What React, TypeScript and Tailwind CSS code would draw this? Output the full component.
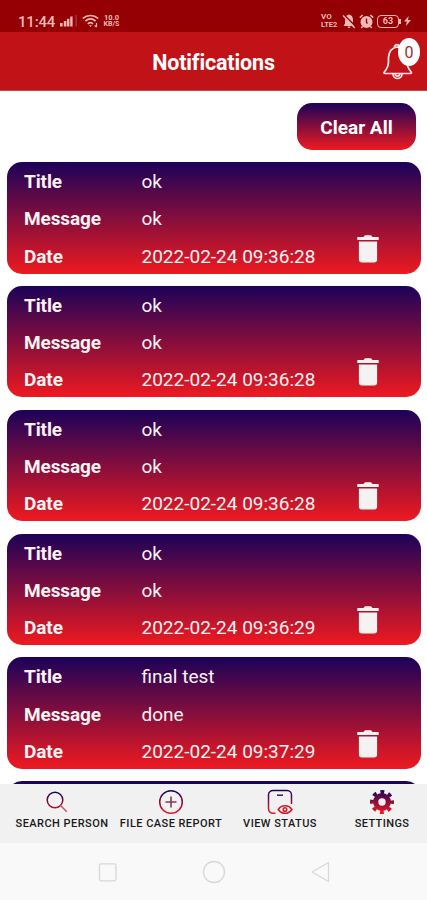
import React from 'react';

interface Notification {
  id: number;
  title: string;
  message: string;
  date: string;
}

const notifications: Notification[] = [
  { id: 1, title: 'ok', message: 'ok', date: '2022-02-24 09:36:28' },
  { id: 2, title: 'ok', message: 'ok', date: '2022-02-24 09:36:28' },
  { id: 3, title: 'ok', message: 'ok', date: '2022-02-24 09:36:28' },
  { id: 4, title: 'ok', message: 'ok', date: '2022-02-24 09:36:29' },
  { id: 5, title: 'final test', message: 'done', date: '2022-02-24 09:37:29' },
];

const StatusBar: React.FC = () => (
  <div className="flex h-8 shrink-0 items-end justify-between bg-[#940003] pr-[16px] pb-[2px] pl-[18px] text-[#f0b9b4]">
    <div className="flex h-[18px] items-center">
      <span className="w-[37px] pt-[2px] text-[15px] leading-[17px] font-medium tracking-[-0.2px] whitespace-nowrap">11:44</span>
      <svg className="ml-[5px]" width="18" height="14" viewBox="0 0 18 14" fill="currentColor">
        <rect x="0" y="9" width="2.6" height="3.5" />
        <rect x="3.8" y="7" width="2.6" height="5.5" />
        <rect x="7" y="4.8" width="2.4" height="7.7" />
        <rect x="10.2" y="2.5" width="2.4" height="10" />
        <rect x="15.4" y="1" width="1.6" height="11.5" opacity="0.25" />
      </svg>
      <svg className="ml-[4px]" width="18" height="14" viewBox="0 0 18 14" fill="none" stroke="currentColor" strokeWidth="1.7">
        <path d="M.8 4.4C5.400 .5 11.600 .5 16.200 4.400" />
        <path d="M3.400 7.200C6.500 4.500 10.500 4.500 13.600 7.200" />
        <path d="M5.800 9.800C7.500 8.300 9.500 8.300 11 9.800" />
        <path d="M7 11.300h3L8.500 13z" fill="currentColor" stroke="none" />
        <path d="M14.500 9v4M12.700 11.500l1.800 1.500" strokeWidth="1.200" />
      </svg>
      <div className="ml-[3px] flex w-[17px] flex-col items-center text-[7.5px] leading-[7.5px] font-bold">
        <span>10.0</span>
        <span className="text-[7px] leading-[7px]">KB/S</span>
      </div>
    </div>
    <div className="flex h-[18px] items-center">
      <div className="flex w-[18px] flex-col text-[8px] leading-[8px] font-bold">
        <span>VO</span>
        <span className="text-[7.5px]">LTE2</span>
      </div>
      <svg className="ml-[3px]" width="14" height="15" viewBox="0 0 14 15">
        <path d="M7 .5C4 1 3 3.500 3 6v3.500L1.500 12h11L11 9.500V6C11 3.500 10 1 7 .5zM5.500 12.600a1.500 1.500 0 0 0 3 0z" fill="currentColor" />
        <path d="M2.200 1 13.700 12.500" stroke="#940003" strokeWidth="1.400" />
        <path d="M1 1.500 12.800 14" stroke="currentColor" strokeWidth="1.300" />
      </svg>
      <svg className="ml-[3px]" width="15" height="15" viewBox="0 0 15 15">
        <circle cx="7.500" cy="8" r="6" fill="currentColor" />
        <path d="M.8 3.700 3.700 1M14.200 3.700 11.300 1M3.500 12.500 2.200 14M11.500 12.500l1.300 1.500" stroke="currentColor" strokeWidth="1.600" />
        <path d="M7.500 4.500V8.500L8.500 9.500" fill="none" stroke="#940003" strokeWidth="1.300" />
      </svg>
      <div className="ml-[3px] flex h-[13px] w-[22px] items-center justify-center rounded-[4px] border border-current pt-px text-[9px] leading-none font-bold">
        63
      </div>
      <div className="h-[5px] w-[2px] bg-current" />
      <svg className="ml-[3px]" width="7" height="10" viewBox="0 0 7 10" fill="currentColor">
        <path d="M4.700 0 0 5.600h2.800L2 10l5-6H4z" />
      </svg>
    </div>
  </div>
);

const Header: React.FC = () => (
  <header className="relative flex h-[59px] shrink-0 items-center justify-center border-b border-[#d5413f] bg-[#c11218]">
    <h1 className="pt-[3px] text-[21.5px] leading-[28px] font-bold tracking-[-0.15px] text-white">Notifications</h1>
    <svg className="absolute top-[10px] left-[382px]" width="32" height="40" viewBox="0 0 32 40" fill="none" stroke="#ffe9e6" strokeWidth="1.700">
      <path d="M12.500 5a2.400 2.400 0 0 1 4.800 0M14.800 5C9 6 7 10.500 6.500 15v5c0 4.500-1.600 7-4.300 10.200q-.8 1.300.8 1.300h25.500q1.600 0 .8-1.300c-2.700-3.200-4.300-5.700-4.300-10.200v-5C24.500 10 21 5 14.800 5z" strokeLinejoin="round" />
      <path d="M11 32a4.500 4.500 0 0 0 9 0M13.300 32a2.200 2.200 0 0 0 4.400 0" />
    </svg>
    <div className="absolute top-[6px] left-[398px] flex h-[28px] w-[22px] items-center justify-center rounded-[50%] bg-white pt-[2px] text-[16px] text-[#9c2c35]">
      0
    </div>
  </header>
);

const TrashIcon: React.FC = () => (
  <svg width="22" height="28" viewBox="0 0 22 28" fill="#f5f3f2">
    <path d="M.3 1.900h6.200L8 .3h6l1.500 1.600h6.200V5H.3zM1.900 6.400h18.200v18.200a3 3 0 0 1-3 3H4.900a3 3 0 0 1-3-3z" />
  </svg>
);

interface FieldProps {
  label: string;
  value: string;
}

const Field: React.FC<FieldProps> = ({ label, value }) => (
  <div className="flex h-[37.2px] items-center pt-[3px] text-[19px] leading-[22px] text-[#fdf3f3]">
    <span className="w-[117.5px] font-bold tracking-[-0.1px]">{label}</span>
    <span>{value}</span>
  </div>
);

interface NotificationCardProps {
  item: Notification;
}

const NotificationCard: React.FC<NotificationCardProps> = ({ item }) => (
  <div className="flex h-[111.300px] w-[414px] shrink-0 items-end justify-between rounded-[15px] bg-linear-to-b/srgb from-[#1b0259] to-[#ee1a20] pr-[42px] pl-[17px]">
    <div>
      <Field label="Title" value={item.title} />
      <Field label="Message" value={item.message} />
      <Field label="Date" value={item.date} />
    </div>
    <button className="mb-[11px]" aria-label="Delete">
      <TrashIcon />
    </button>
  </div>
);

const SearchIcon = () => (
  <svg width="22" height="22" viewBox="0 0 22 22" fill="none" stroke="url(#brand)" strokeWidth="1.500">
    <circle cx="9" cy="9" r="7.800" />
    <path d="m14.300 14.300 6.500 6.500" stroke="#d9505c" />
  </svg>
);

const AddIcon = () => (
  <svg width="26" height="26" viewBox="0 0 26 26" fill="none" stroke="url(#brand)">
    <circle cx="13" cy="13" r="11.300" strokeWidth="1.500" />
    <path d="M13 7.500v11" stroke="#713052" strokeWidth="1.500" />
    <path d="M7.500 13h11" stroke="#8c3452" strokeWidth="1.500" />
  </svg>
);

const StatusIcon = () => (
  <svg width="26" height="26" viewBox="0 0 26 26" fill="none" stroke="url(#brand)" strokeWidth="1.500">
    <path d="M8.500 24.300H6a4.500 4.500 0 0 1-4.500-4.500v-14A4.500 4.500 0 0 1 6 1.500h14a4.500 4.500 0 0 1 4.500 4.500v9" />
    <path d="M10 6.200h6" stroke="#2b1d62" strokeWidth="1.500" />
    <path d="M11.300 20.500c3-5 10.500-5 13.500 0-3 5-10.500 5-13.500 0z" stroke="#cf1e30" strokeWidth="1.700" />
    <circle cx="18" cy="20.500" r="1.800" stroke="#cf1e30" />
  </svg>
);

const GearIcon = () => (
  <svg width="26" height="26" viewBox="0 0 26 26" fill="none">
    <circle cx="13" cy="13" r="6.300" stroke="url(#brand)" strokeWidth="5.200" />
    <circle cx="13" cy="13" r="10" stroke="url(#brand)" strokeWidth="4" strokeDasharray="3.800 4.054" strokeDashoffset="1.900" />
  </svg>
);

interface TabProps {
  label: string;
  className: string;
  children: React.ReactNode;
}

const Tab: React.FC<TabProps> = ({ label, className, children }) => (
  <div className={`flex flex-col items-center ${className}`}>
    <div className="flex h-[28px] items-center">{children}</div>
    <span className="text-[11px] leading-[15px] font-medium whitespace-nowrap text-[#191919]">{label}</span>
  </div>
);

const TabBar: React.FC = () => (
  <nav className="flex h-[59px] shrink-0 bg-[#f1f1f1] pt-[4px] pl-[13px]">
    <svg className="absolute h-0 w-0" aria-hidden="true">
      <linearGradient id="brand" gradientUnits="userSpaceOnUse" x1="0" y1="1" x2="0" y2="24">
        <stop offset="0" stopColor="#1b0259" />
        <stop offset="1" stopColor="#ee1a20" />
      </linearGradient>
    </svg>
    <Tab label="SEARCH PERSON" className="w-[98px] tracking-[0.45px]">
      <div className="mr-[11px]"><SearchIcon /></div>
    </Tab>
    <Tab label="FILE CASE REPORT" className="ml-[6px] w-[108px] tracking-[0.45px]">
      <AddIcon />
    </Tab>
    <Tab label="VIEW STATUS" className="ml-[15px] w-[80px] tracking-[0.45px]">
      <StatusIcon />
    </Tab>
    <Tab label="SETTINGS" className="ml-[32px] w-[60px] tracking-[0.4px]">
      <GearIcon />
    </Tab>
  </nav>
);

const SystemNav: React.FC = () => (
  <div className="flex h-[57px] shrink-0 items-center justify-between bg-[#f9f9f9] pr-[97px] pl-[98px]">
    <svg width="20" height="20" viewBox="0 0 20 20" fill="none" stroke="#d8d8d8" strokeWidth="1.300">
      <rect x="1.500" y="1.800" width="16.500" height="17" rx="1.500" />
    </svg>
    <svg width="24" height="24" viewBox="0 0 24 24" fill="none" stroke="#d8d8d8" strokeWidth="1.300">
      <circle cx="12" cy="12" r="10.500" />
    </svg>
    <svg width="20" height="22" viewBox="0 0 20 22" fill="none" stroke="#d8d8d8" strokeWidth="1.300" strokeLinejoin="round">
      <path d="M18.500 1.500v19L2 11z" />
    </svg>
  </div>
);

export default function App() {
  return (
    <div className="flex h-[900px] w-[427px] flex-col overflow-hidden bg-white font-['Roboto',sans-serif]">
      <StatusBar />
      <Header />
      <main className="flex min-h-0 flex-1 flex-col overflow-hidden pt-[12px] pl-[7px]">
        <button className="mr-[11px] h-[47px] w-[119px] shrink-0 self-end rounded-[15px] bg-linear-to-b/srgb from-[#1b0259] to-[#ee1a20] pt-[3px] text-[19px] font-bold text-white">
          Clear All
        </button>
        <div className="mt-[12.300px] flex flex-col gap-[12.500px]">
          {notifications.map((item) => (
            <NotificationCard key={item.id} item={item} />
          ))}
          <div className="h-[111px] w-[414px] shrink-0 rounded-[15px] bg-linear-to-b/srgb from-[#1b0259] to-[#ee1a20]" />
        </div>
      </main>
      <TabBar />
      <SystemNav />
    </div>
  );
}
